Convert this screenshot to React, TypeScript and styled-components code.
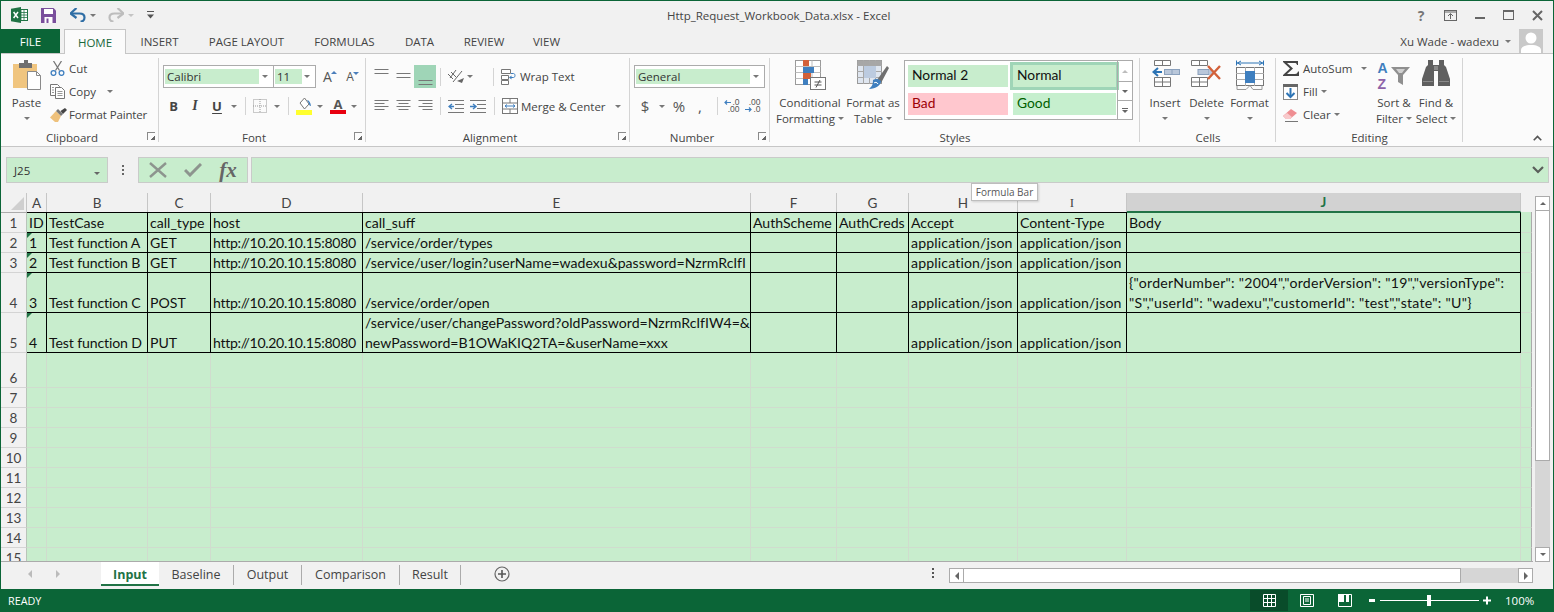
import React from 'react';
import styled, { createGlobalStyle } from 'styled-components';

const GREEN = '#0b6537';
const CELL = '#c8edcd';
const UI = '"Open Sans", "Liberation Sans", sans-serif';
const SHEET = 'Lato, "Liberation Sans", sans-serif';

const Global = createGlobalStyle`
  html, body { margin: 0; padding: 0; background: #f1f1f1; }
  * { box-sizing: border-box; }
`;

const Win = styled.div`
  width: 1554px; height: 612px; overflow: hidden; background: #f1f1f1;
  border: 1px solid ${GREEN}; border-bottom: 0;
  display: flex; flex-direction: column;
  font-family: ${UI}; color: #444; font-size: 11.5px;
`;

/* ---------- generic bits ---------- */
const Slot = styled.span<{ $w: number; $on?: boolean }>`
  display: inline-flex; flex: none; width: ${p => p.$w}px; height: 100%;
  align-items: center; justify-content: center;
  background: ${p => (p.$on ? '#9fd5b7' : 'transparent')};
`;
const CaretMark = styled.span<{ $c?: string }>`
  display: inline-block; width: 0; height: 0; flex: none;
  border-left: 3px solid transparent; border-right: 3px solid transparent;
  border-top: 3px solid ${p => p.$c || '#777'};
`;
const VSep = styled.span`
  display: block; width: 1px; height: 18px; background: #d4d4d4;
`;

/* ---------- title bar ---------- */
const TitleBar = styled.div`
  height: 28px; display: flex; align-items: center; position: relative; flex: none;
`;
const Title = styled.div`
  position: absolute; left: 666px; top: 7px; width: 220px; text-align: center;
  font-size: 11.5px; white-space: nowrap; color: #444;
`;
const WinBtns = styled.div`
  margin-left: auto; display: flex; height: 100%; margin-right: 1px;
`;
const HelpMark = styled.span`
  font-weight: 700; font-size: 14px; color: #777;
`;

/* ---------- tabs ---------- */
const TabBar = styled.div`
  height: 25px; display: flex; flex: none; border-bottom: 1px solid #c6c6c6; position: relative;
`;
const FileTab = styled.div`
  width: 59px; height: 24px; background: ${GREEN}; color: #fff;
  display: flex; align-items: center; justify-content: center; font-size: 11.5px;
`;
const RibbonTab = styled.div<{ $w: number; $active?: boolean }>`
  width: ${p => p.$w}px; height: ${p => (p.$active ? 25 : 24)}px;
  display: flex; align-items: center; justify-content: center; font-size: 11.5px; flex: none;
  color: ${p => (p.$active ? '#19693c' : '#444')};
  background: ${p => (p.$active ? '#fbfbfb' : 'transparent')};
  ${p => (p.$active ? 'border: 1px solid #c6c6c6; border-bottom: 0; z-index: 1;' : '')}
`;
const UserBox = styled.div`
  margin-left: auto; display: flex; align-items: center; height: 24px; font-size: 11.5px; margin-right: 10px;
`;
const UserName = styled.span`
  margin-right: 6px;
`;
const Avatar = styled.span`
  display: block; width: 24px; height: 24px; margin-left: 8px;
`;

/* ---------- ribbon ---------- */
const Ribbon = styled.div`
  height: 93px; flex: none; background: #fbfbfb; border-bottom: 1px solid #c6c6c6;
  display: flex; position: relative;
`;
const Group = styled.div<{ $w: number; $pad?: number }>`
  position: relative; flex: none; width: ${p => p.$w}px; height: 92px;
  padding-left: ${p => p.$pad ?? 4}px; display: flex; flex-direction: column;
  &::after {
    content: ''; position: absolute; right: 0; top: 4px; bottom: 4px; width: 1px; background: #d4d4d4;
  }
`;
const GroupBody = styled.div`
  height: 76px; flex: none; display: flex; align-items: flex-start;
`;
const Stack = styled.div`
  display: flex; flex-direction: column;
`;
const SmallStack = styled(Stack)`
  padding-top: 3px;
`;
const CollapseCol = styled(Stack)`
  padding-top: 80px;
`;
const GroupLabel = styled.div<{ $shift: number; $launcher?: boolean }>`
  height: 16px; line-height: 16px; text-align: center; font-size: 11.5px;
  margin-left: ${p => p.$shift}px;
  padding-right: ${p => (p.$launcher ? 16 : 0)}px;
`;
const Launcher = styled.span`
  position: absolute; right: 4px; bottom: 6px; display: block; width: 8px; height: 8px;
  border-left: 1px solid #8a8a8a; border-top: 1px solid #8a8a8a;
  &::after {
    content: ''; position: absolute; right: 0; bottom: 0; width: 4px; height: 4px;
    background: linear-gradient(135deg, transparent 45%, #666 45%);
  }
`;
const Row1 = styled.div`
  margin-top: 11px; height: 23px; display: flex; align-items: center;
`;
const Row2 = styled.div`
  margin-top: 9px; height: 18px; display: flex; align-items: center;
`;
const Combo = styled.div<{ $w: number; $fill: number; $joined?: boolean }>`
  width: ${p => p.$w}px; height: 23px; border: 1px solid #ababab; background: #fff; flex: none;
  padding: 3px 1px; position: relative; font-size: 11.5px; display: flex;
  margin-left: ${p => (p.$joined ? -1 : 0)}px;
  & > b {
    display: block; font-weight: 400; width: ${p => p.$fill}px; height: 15px; line-height: 15px;
    background: ${CELL}; padding-left: 2px; color: #333;
  }
`;
const ComboCaret = styled.span`
  margin-left: auto; margin-right: 4px; align-self: center; display: flex;
`;
const SmallRow = styled.div<{ $icon: number; $w: number }>`
  height: 23px; width: ${p => p.$w}px; display: flex; align-items: center; white-space: nowrap;
  & > i { display: flex; width: ${p => p.$icon}px; flex: none; justify-content: flex-start; font-style: normal; }
`;
const Gap = styled.span<{ $w: number }>`
  display: block; flex: none; width: ${p => p.$w}px;
`;
const Large = styled.div<{ $w: number }>`
  width: ${p => p.$w}px; flex: none; padding-top: 6px; display: flex; flex-direction: column;
  align-items: center; line-height: 15.5px; white-space: nowrap; font-size: 11.5px;
  & > i { display: flex; height: 35px; align-items: flex-start; justify-content: center; font-style: normal; }
  & > span { display: flex; align-items: center; gap: 3px; height: 15.5px; }
`;
const GlyphB = styled.span`
  font-weight: 700; font-size: 13px; color: #444;
`;
const GlyphI = styled.span`
  font-family: 'Liberation Serif', serif; font-style: italic; font-weight: 700; font-size: 14px; color: #444;
`;
const GlyphU = styled.span`
  font-weight: 700; font-size: 13px; color: #444; text-decoration: underline; text-underline-offset: 2px;
`;
const Grow = styled.span<{ $size: number }>`
  position: relative; display: inline-block; font-size: ${p => p.$size}px; color: #555; line-height: 1; font-family: ${UI};
`;
const TinyTri = styled.span<{ $down?: boolean }>`
  position: absolute; right: -5px; top: 1px; width: 0; height: 0;
  border-left: 3px solid transparent; border-right: 3px solid transparent;
  ${p => (p.$down ? 'border-top: 3px solid #4a7ebb;' : 'border-bottom: 3px solid #4a7ebb;')}
`;
const ColorA = styled.span<{ $bar: string }>`
  display: flex; flex-direction: column; align-items: center; width: 16px; line-height: 12px;
  font-size: 13px; font-weight: 700; color: #555;
  &::after { content: ''; display: block; width: 16px; height: 4px; background: ${p => p.$bar}; }
`;
const NumGlyph = styled.span<{ $size?: number }>`
  font-size: ${p => p.$size ?? 15}px; color: #555;
`;
const Dec = styled.span`
  display: flex; flex-direction: column; align-items: flex-end; font-size: 8.5px; line-height: 7.5px; color: #555;
  font-family: "Liberation Sans", sans-serif;
  & > span { display: flex; align-items: center; gap: 1px; }
`;
const TextAfter = styled.span`
  white-space: nowrap;
`;
const TightText = styled(TextAfter)`
  letter-spacing: -0.15px;
`;
const SortWrap = styled.span`
  display: flex; align-items: flex-start; height: 32px;
`;
const SortLetters = styled.span`
  display: flex; flex-direction: column; width: 13px; font-weight: 700; font-size: 14px;
  font-family: "Liberation Sans", sans-serif;
`;
const SortA = styled.span`
  height: 16px; line-height: 16px; color: #3f7fbf;
`;
const SortZ = styled.span`
  height: 16px; line-height: 16px; color: #8e63a8;
`;

/* gallery */
const Gallery = styled.div`
  width: 229px; height: 60px; margin-top: 6px; margin-left: 4px; flex: none;
  border: 1px solid #ababab; background: #fff; display: flex; padding: 4px 0 0 3px;
`;
const StyleGrid = styled.div`
  display: grid; grid-template-columns: 100px 103px; grid-template-rows: 22px 22px;
  column-gap: 5px; row-gap: 6px;
`;
const StyleCell = styled.div<{ $bg: string; $fg: string; $sel?: boolean }>`
  background: ${p => p.$bg}; color: ${p => p.$fg}; font-family: ${SHEET}; font-size: 13.8px;
  line-height: 19px; padding-left: 4px;
  ${p => (p.$sel ? 'box-shadow: 0 0 0 3px #9fd5b7;' : '')}
`;
const GalScroll = styled.div`
  width: 15px; height: 58px; margin: -4px 0 0 auto; border-left: 1px solid #ababab;
  display: grid; grid-template-rows: 20px 19px 19px;
`;
const GalBtn = styled.div<{ $top?: boolean }>`
  display: flex; flex-direction: column; align-items: center; justify-content: center; gap: 1px;
  ${p => (p.$top ? '' : 'border-top: 1px solid #ababab;')}
`;
const UpMark = styled.span<{ $c?: string }>`
  display: block; width: 0; height: 0;
  border-left: 3px solid transparent; border-right: 3px solid transparent;
  border-bottom: 3px solid ${p => p.$c || '#bdbdbd'};
`;
const BarMark = styled.span`
  display: block; width: 6px; height: 1px; background: #666;
`;

/* ---------- formula bar ---------- */
const FormulaBar = styled.div`
  height: 46px; flex: none; display: flex; padding: 10px 0 0 5px;
`;
const NameBox = styled.div`
  width: 102px; height: 26px; background: ${CELL}; border: 1px solid #c9cbc9; display: flex; align-items: center;
  padding: 0 7px 0 7px; font-size: 11.5px; color: #333;
  & > span { margin-left: auto; }
`;
const Dots = styled.div`
  width: 30px; height: 26px; display: flex; align-items: center; justify-content: center;
`;
const FxBox = styled.div`
  width: 110px; height: 26px; background: ${CELL}; border: 1px solid #c9cbc9; display: flex; align-items: center;
`;
const FxGlyph = styled.span`
  font-family: 'Liberation Serif', serif; font-style: italic; font-weight: 700; font-size: 21px; color: #666; width: 38px; text-align: center; line-height: 20px;
`;
const FormulaInput = styled.div`
  width: 1298px; height: 26px; margin-left: 3px; background: ${CELL}; border: 1px solid #c9cbc9;
  display: flex; align-items: center; justify-content: flex-end; padding-right: 3px;
`;

/* ---------- sheet ---------- */
const SheetArea = styled.div`
  height: 369px; flex: none; display: flex; position: relative;
`;
const SheetFrame = styled.div`
  width: 1532px; height: 369px; overflow: hidden; flex: none; border-bottom: 1px solid #ababab;
`;
const SheetGrid = styled.div<{ $cols: string; $rows: string }>`
  display: grid; grid-template-columns: ${p => p.$cols}; grid-template-rows: ${p => p.$rows};
  font-family: ${SHEET}; font-size: 14.1px; color: #111;
`;
const Corner = styled.div`
  background: #f1f1f1; border-right: 1px solid #c6c6c6; position: relative;
  &::after {
    content: ''; position: absolute; right: 2px; bottom: 2px; width: 0; height: 0;
    border-left: 13px solid transparent; border-bottom: 13px solid #cfcfcf;
  }
`;
const ColHead = styled.div<{ $sel?: boolean; $blank?: boolean }>`
  background: ${p => (p.$sel ? '#d2d2d2' : '#f1f1f1')};
  color: ${p => (p.$sel ? '#217346' : '#444')}; font-weight: ${p => (p.$sel ? 700 : 400)};
  ${p => (p.$blank ? '' : 'border-right: 1px solid #c6c6c6;')}
  ${p => (p.$sel ? 'border-bottom: 1px solid #217346;' : '')}
  display: flex; align-items: center; justify-content: center; line-height: 18px; font-size: 13.5px;
`;
const RowHead = styled.div<{ $first?: boolean }>`
  background: #f1f1f1; border-right: 1px solid #b9c4b9; border-bottom: 1px solid #d4d4d4; color: #444;
  ${p => (p.$first ? 'border-top: 1px solid #ababab;' : '')}
  display: flex; align-items: flex-end; justify-content: center; line-height: 17px; font-size: 13.5px;
`;
const Cell = styled.div<{ $on?: boolean; $top?: boolean; $wrap?: boolean; $sel?: boolean; $end?: boolean }>`
  position: relative; background: ${CELL}; overflow: hidden; padding: 0 2px;
  display: flex; align-items: flex-end;
  line-height: 20px; white-space: ${p => (p.$wrap ? 'pre' : 'nowrap')};
  border-right: 1px solid ${p => (p.$on ? '#000' : p.$end ? '#ababab' : '#d0dcce')};
  border-bottom: 1px solid ${p => (p.$on ? '#000' : '#d0dcce')};
  ${p => (p.$top ? `border-top: 1px solid ${p.$sel ? '#217346' : '#000'};` : '')}
`;
const CellText = styled.span<{ $ls: number }>`
  display: block; margin-bottom: -1px; letter-spacing: ${p => p.$ls}px;
`;
const NoteMark = styled.span`
  position: absolute; left: 0; top: 0; width: 0; height: 0;
  border-top: 5px solid #217346; border-right: 5px solid transparent;
`;
const Tooltip = styled.div`
  position: absolute; left: 970px; top: -10px; width: 67px; height: 18px; background: #fff; z-index: 3;
  border: 1px solid #bdbdbd; box-shadow: 1px 1px 2px rgba(0,0,0,.15); font-size: 10px; line-height: 16px; text-align: center; color: #575757; white-space: nowrap;
`;
const VScroll = styled.div`
  width: 15px; margin-left: 2px; height: 369px; padding-top: 3px; display: flex; flex-direction: column; flex: none;
`;
const ScrollBtn = styled.div`
  height: 15px; width: 15px; flex: none; background: #fff; border: 1px solid #ababab;
  display: flex; align-items: center; justify-content: center;
`;
const VThumb = styled.div<{ $h: number }>`
  height: ${p => p.$h}px; flex: none; background: #fff; border: 1px solid #ababab; border-top: 0;
`;
const VTrack = styled.div`
  flex: 1; background: #d6d6d6;
`;

/* ---------- sheet tabs ---------- */
const TabStrip = styled.div`
  height: 27px; flex: none; display: flex; align-items: flex-start; position: relative;
`;
const NavArrows = styled.div`
  width: 100px; height: 24px; display: flex; align-items: center; padding-left: 27px; gap: 24px;
`;
const NavArrow = styled.span`
  display: block; width: 0; height: 0; border-top: 4px solid transparent; border-bottom: 4px solid transparent;
`;
const NavLeft = styled(NavArrow)<{ $dark?: boolean }>`
  border-right: 4px solid ${p => (p.$dark ? '#666' : '#bbb')};
`;
const NavRight = styled(NavArrow)<{ $dark?: boolean }>`
  border-left: 4px solid ${p => (p.$dark ? '#666' : '#bbb')};
`;
const SheetTab = styled.div<{ $w: number; $active?: boolean }>`
  width: ${p => p.$w}px; flex: none; height: ${p => (p.$active ? 24 : 20)}px;
  margin-top: ${p => (p.$active ? 0 : 3)}px;
  display: flex; align-items: center; justify-content: center; font-size: 12.5px; white-space: nowrap;
  ${p => (p.$active
    ? `background:#fff; color:#217346; font-weight:700; border-bottom:2px solid #217346; padding-top:2px;`
    : `border-right:1px solid #ababab; color:#444; padding-bottom:2px;`)}
`;
const Plus = styled.div`
  margin-left: 33px; margin-top: 4px; width: 16px; height: 16px; display: flex;
`;
const HScrollWrap = styled.div`
  margin-left: auto; display: flex; align-items: center; height: 21px; margin-right: 20px;
`;
const TabDots = styled.div`
  width: 32px; display: flex; justify-content: center;
`;
const HThumb = styled.div`
  width: 497px; height: 15px; background: #fff; border: 1px solid #ababab; border-left: 0;
`;
const HTrack = styled.div`
  width: 57px; height: 15px; background: #d6d6d6;
`;
const HRow = styled.div`
  display: flex; margin-top: 6px;
`;

/* ---------- status ---------- */
const Status = styled.div`
  height: 23px; flex: none; margin: 0 -1px; background: ${GREEN}; color: #fff; display: flex; align-items: center;
  font-size: 10.8px; padding: 0 12px 0 8px;
`;
const ViewBtns = styled.div`
  margin-left: auto; display: flex; height: 22px; align-items: center;
`;
const ViewBtn = styled.div<{ $on?: boolean }>`
  width: 38px; height: 21px; display: flex; align-items: center; justify-content: center;
  background: ${p => (p.$on ? '#094c2a' : 'transparent')};
`;
const Zoomer = styled.div`
  display: flex; align-items: center; width: 127px; margin-left: 2px; gap: 2px;
`;
const ZoomTrack = styled.div`
  flex: 1; height: 1px; background: #fff; position: relative;
  &::after { content:''; position:absolute; left: 47px; top:-5px; width:4px; height:11px; background:#fff; }
`;
const ZoomPct = styled.span`
  font-size: 11.5px; width: 49px; padding-left: 12px;
`;

/* ---------- icons ---------- */
const ExcelLogo = () => (
  <svg width="17" height="16" viewBox="0 0 17 16">
    <rect x="6.5" y="2.5" width="10" height="11" fill="#fff" stroke="#1f7244" />
    <path d="M10 3v10M13 3v10M7 5.5h9M7 8h9M7 10.5h9" stroke="#1f7244" strokeWidth=".8" />
    <path d="M0 1.8 10 0v16L0 14.2z" fill="#1f7244" />
    <path d="M2.6 5 7 11M7 5l-4.4 6" stroke="#fff" strokeWidth="1.5" />
  </svg>
);
const SaveIcon = () => (
  <svg width="15" height="15" viewBox="0 0 15 15">
    <path d="M0 0h12.5L15 2.5V15H0z" fill="#7a4f9c" />
    <rect x="3" y="1" width="9" height="5" fill="#fff" />
    <rect x="3.5" y="9" width="8" height="6" fill="#fff" />
    <rect x="5.5" y="10.5" width="2" height="4.5" fill="#7a4f9c" />
  </svg>
);
const UndoIcon = ({ c }: { c: string }) => (
  <svg width="16" height="14" viewBox="0 0 16 14">
    <path d="M1.5 5.5h8c3 0 5 1.6 5 4s-1.5 4-4 4" fill="none" stroke={c} strokeWidth="2.2" />
    <path d="M6.5 0 .5 5.5 6.5 10" fill="none" stroke={c} strokeWidth="2.2" />
  </svg>
);
const RedoIcon = ({ c }: { c: string }) => (
  <svg width="16" height="14" viewBox="0 0 16 14">
    <path d="M14.5 5.5h-8c-3 0-5 1.6-5 4s1.5 4 4 4" fill="none" stroke={c} strokeWidth="2.2" />
    <path d="M9.5 0l6 5.5-6 4.5" fill="none" stroke={c} strokeWidth="2.2" />
  </svg>
);
const QatMore = () => (
  <svg width="7" height="8" viewBox="0 0 7 8">
    <path d="M0 .5h7" stroke="#555" />
    <path d="M0 3.5h7L3.5 7.5z" fill="#555" />
  </svg>
);
const PasteIcon = () => (
  <svg width="30" height="32" viewBox="0 0 30 32">
    <path d="M1 4h24v24H1z" fill="#f0c57f" />
    <path d="M7 3h5V0h4v3h4v5H7z" fill="#6f6f6f" />
    <path d="M15.5 11.5h9l4 4v14h-13z" fill="#fff" stroke="#8a8a8a" />
    <path d="M24.5 11.5v4h4" fill="none" stroke="#8a8a8a" />
  </svg>
);
const CutIcon = () => (
  <svg width="15" height="15" viewBox="0 0 15 15">
    <path d="M3.5 0l6 9.5M11.5 0l-6 9.500" stroke="#777" strokeWidth="1.3" fill="none" />
    <circle cx="3.5" cy="12" r="2.4" fill="none" stroke="#3f7fbf" strokeWidth="1.3" />
    <circle cx="11.5" cy="12" r="2.4" fill="none" stroke="#3f7fbf" strokeWidth="1.3" />
  </svg>
);
const CopyIcon = () => (
  <svg width="16" height="15" viewBox="0 0 16 15">
    <path d="M.5.5h7l2 2v9h-9z" fill="#fff" stroke="#777" />
    <path d="M5.5 3.5h6l3 3v8h-9z" fill="#fff" stroke="#777" />
    <path d="M2 3.5h2M2 6h2M2 8.5h2M7.5 7.5h5M7.5 9.5h5M7.5 11.5h5" stroke="#999" />
  </svg>
);
const PainterIcon = () => (
  <svg width="17" height="14" viewBox="0 0 17 14">
    <path d="M0 9.5 6 3l5 5-3 6H5z" fill="#eec17c" />
    <path d="M6 3l5 5 2-2-5-5z" fill="#777" />
    <path d="M10.5 3 15 0l2 2-4 4z" fill="#444" />
  </svg>
);
const LinesIcon = ({ y, w = [14, 14, 14, 14], a = 'l' }: { y: number[]; w?: number[]; a?: 'l' | 'c' | 'r' }) => (
  <svg width="15" height="22" viewBox="0 0 15 22">
    {y.map((v, i) => {
      const ww = w[i] ?? 14;
      const x = a === 'l' ? 0.5 : a === 'c' ? (15 - ww) / 2 : 14.5 - ww;
      return <path key={i} d={`M${x} ${v + 0.5}h${ww}`} stroke="#777" />;
    })}
  </svg>
);
const OrientIcon = () => (
  <svg width="17" height="15" viewBox="0 0 17 15">
    <path d="M2 9 8 1M5 13l9-11" stroke="#666" fill="none" />
    <path d="M0 5l5 5M3 3l5 5" stroke="#666" fill="none" />
    <path d="M9 12l7-3-2 5z" fill="#666" />
  </svg>
);
const IndentIcon = ({ flip }: { flip?: boolean }) => (
  <svg width="16" height="13" viewBox="0 0 16 13">
    <path d="M0 .5h16M7 4.5h9M7 8.5h9M0 12.5h16" stroke="#777" />
    {flip ? <path d="M0 6.5h5M3 4l3 2.5L3 9" stroke="#3f7fbf" strokeWidth="1.4" fill="none" /> : <path d="M6 6.5H1M4 4 1 6.5 4 9" stroke="#3f7fbf" strokeWidth="1.4" fill="none" />}
  </svg>
);
const WrapIcon = () => (
  <svg width="16" height="16" viewBox="0 0 16 16">
    <path d="M.5 .5h9v4h-9zM.5 6.5h7v4h-7zM.5 11.5h7v4h-7z" fill="#fff" stroke="#777" />
    <path d="M9 8.5h3.500c2 0 2-4 0-4H10" fill="none" stroke="#3f7fbf" />
    <path d="M8 8.500l2.500-2v4z" fill="#3f7fbf" />
  </svg>
);
const MergeIcon = () => (
  <svg width="16" height="16" viewBox="0 0 16 16">
    <rect x=".5" y=".5" width="15" height="15" fill="#fff" stroke="#777" />
    <path d="M.5 5h15M.5 11h15M8 .5V5M8 11v4.500" stroke="#777" />
    <path d="M3 8h10M5 6.500 3 8l2 1.500M11 6.500 13 8l-2 1.500" stroke="#3f7fbf" fill="none" />
  </svg>
);
const BorderIcon = () => (
  <svg width="14" height="14" viewBox="0 0 14 14">
    <rect x=".5" y=".5" width="13" height="13" fill="none" stroke="#999" strokeDasharray="1 1" />
    <path d="M7 0v14M0 7h14" stroke="#999" strokeDasharray="1 1" />
  </svg>
);
const FillIcon = () => (
  <svg width="16" height="18" viewBox="0 0 16 18">
    <path d="M4 6 8.500 1 13 7l-4.500 5z" fill="#fff" stroke="#777" />
    <path d="M11 3c2 .5 3.500 2 4 6-1.500 0-2-1-2-2.500z" fill="#3f7fbf" />
    <rect y="13" width="16" height="5" fill="#ffff2e" />
  </svg>
);
const IncDec = ({ inc }: { inc?: boolean }) => (
  <svg width="7" height="7" viewBox="0 0 7 7">
    {inc ? <path d="M7 3.500H1M3 1.500 1 3.500l2 2" stroke="#3f7fbf" strokeWidth="1.200" fill="none" /> : <path d="M0 3.500h6M4 1.500l2 2-2 2" stroke="#3f7fbf" strokeWidth="1.200" fill="none" />}
  </svg>
);
const CondIcon = () => (
  <svg width="31" height="31" viewBox="0 0 31 31">
    <rect x=".5" y=".5" width="25" height="24" fill="#fff" stroke="#9a9a9a" />
    <path d="M9 .5v24M17 .5v24M.5 6.500h25M.5 12.500h25M.5 18.500h25" stroke="#bdbdbd" />
    <rect x="8" y="0" width="6" height="6" fill="#d2613a" />
    <rect x="8" y="7" width="11" height="6" fill="#3f7fbf" />
    <rect x="8" y="13" width="8" height="6" fill="#d2613a" />
    <rect x="8" y="19" width="5" height="6" fill="#3f7fbf" />
    <rect x="15.500" y="17.500" width="15" height="12" fill="#fff" stroke="#777" />
    <path d="M19.500 22h7M19.500 25h7M21 27.500 25 20" stroke="#555" />
  </svg>
);
const TableIcon = () => (
  <svg width="32" height="30" viewBox="0 0 32 30">
    <rect x=".5" y=".5" width="24" height="23" fill="#dfe6f0" stroke="#9a9a9a" />
    <rect x=".5" y=".5" width="24" height="5" fill="#a7a7a7" />
    <path d="M6.500 0v24M12.500 0v24M18.500 0v24M0 5.500h25M0 11.500h25M0 17.500h25" stroke="#a8a8a8" />
    <rect x="7" y="6" width="12" height="12" fill="#bccbe0" />
    <path d="M20 20 30 6l2 2-8 15z" fill="#6f6f6f" />
    <path d="M16 20c3-2 6-1 8 1 0 4-5 8-12 8 2-2 4-3 4-9z" fill="#3f7fbf" />
    <path d="M17 23c1-1 3-1 4 1" stroke="#fff" fill="none" />
  </svg>
);
const InsertIcon = () => (
  <svg width="29" height="28" viewBox="0 0 29 28">
    <path d="M3.500 .5h16v5h-16zM11.500 .5v5M3.500 17.500h16v9h-16zM3.500 22h16M11.500 17.500v9" fill="#fff" stroke="#777" />
    <rect x="13.500" y="9.500" width="15" height="5" fill="#b9c7da" stroke="#8aa0bc" />
    <path d="M21 9v6" stroke="#8aa0bc" />
    <path d="M3 12h8" stroke="#2d74b5" strokeWidth="2" />
    <path d="M7 8 2.500 12 7 16" stroke="#2d74b5" strokeWidth="2" fill="none" />
  </svg>
);
const DeleteIcon = () => (
  <svg width="31" height="28" viewBox="0 0 31 28">
    <path d="M.500 .5h16v5h-16zM8.500 .5v5M.500 17.500h16v9h-16zM.500 22h16M8.500 17.500v9" fill="#fff" stroke="#777" />
    <rect x="7" y="9.500" width="11" height="5" fill="#b9c7da" stroke="#8aa0bc" />
    <path d="M18 8l5 4-5 4z" fill="#b9c7da" />
    <path d="M17 6l12 13M29 6 17 19" stroke="#d2613a" strokeWidth="2.400" />
  </svg>
);
const FormatIcon = () => (
  <svg width="28" height="31" viewBox="0 0 28 31">
    <path d="M.500 .5v5M27.500 .5v5M1 3h26M5 1 1.500 3 5 5M23 1l3.500 2L23 5" stroke="#2d74b5" fill="none" />
    <rect x=".5" y="7.500" width="27" height="18" fill="#fff" stroke="#777" />
    <path d="M9.500 7v19M18.500 7v19M0 13.500h28M0 19.500h28" stroke="#aaa" />
    <rect x="9" y="11" width="10" height="12" fill="#3f7fbf" />
    <path d="M1 25.500v4h9l4-4M14 25.500l3 4h9v-4" fill="none" stroke="#999" />
  </svg>
);
const SigmaIcon = () => (
  <svg width="16" height="15" viewBox="0 0 16 15">
    <path d="M0 0h15v4h-1c-.3-1.500-1-2-2.500-2H4l6 5.500L4 13h8c1.500 0 2.500-.8 3-2.500h1V15H0v-1l7-6.500L0 1z" fill="#444" />
  </svg>
);
const FillDownIcon = () => (
  <svg width="15" height="16" viewBox="0 0 15 16">
    <rect x=".5" y=".5" width="14" height="15" fill="#fff" stroke="#888" />
    <rect width="15" height="3" fill="#666" />
    <path d="M7.500 4v9" stroke="#2d74b5" strokeWidth="2" />
    <path d="M3.500 9l4 4 4-4" stroke="#2d74b5" strokeWidth="2" fill="none" />
  </svg>
);
const EraserIcon = () => (
  <svg width="15" height="14" viewBox="0 0 15 14">
    <path d="M0 8 8 1l6 4-7 6H3z" fill="#ef8e92" />
    <path d="M0 8l3 3h4l2-2-5-4z" fill="#f8c9cb" />
    <path d="M2 13.500h13" stroke="#777" />
  </svg>
);
const FunnelIcon = () => (
  <svg width="20" height="28" viewBox="0 0 20 28">
    <path d="M0 7h19l-7 8v10l-5-3v-7z" fill="#8f8f8f" />
    <path d="M5 9h9l-3 4H8z" fill="#d0d0d0" />
  </svg>
);
const BinocularIcon = () => (
  <svg width="28" height="26" viewBox="0 0 28 26">
    <path d="M6 0h5v5h6V0h5v5l2 2 4 12v7H16V11h-4v15H0v-7L4 7l2-2z" fill="#5f5f5f" />
    <rect x="12" y="6" width="4" height="4" fill="#8a8a8a" />
    <rect x="1" y="21" width="10" height="1" fill="#8a8a8a" />
    <rect x="17" y="21" width="10" height="1" fill="#8a8a8a" />
  </svg>
);
const Chevron = ({ up, c = '#555', w = 12 }: { up?: boolean; c?: string; w?: number }) => (
  <svg width={w} height="8" viewBox="0 0 12 8">
    <path d={up ? 'M1 7l5-5 5 5' : 'M1 1l5 5 5-5'} fill="none" stroke={c} strokeWidth="2.200" />
  </svg>
);
const WinRestoreUp = () => (
  <svg width="13" height="11" viewBox="0 0 13 11">
    <rect x=".5" y=".5" width="12" height="10" fill="none" stroke="#666" />
    <path d="M.5 2h12" stroke="#666" />
    <path d="M6.500 9V4M4 6l2.500-2.500L9 6" stroke="#666" fill="none" />
  </svg>
);
const WinMin = () => (
  <svg width="10" height="10" viewBox="0 0 10 10"><rect y="7" width="10" height="2" fill="#666" /></svg>
);
const WinMax = () => (
  <svg width="11" height="10" viewBox="0 0 11 10">
    <rect x=".5" y=".5" width="10" height="9" fill="none" stroke="#666" />
    <rect width="11" height="2" fill="#666" />
  </svg>
);
const WinClose = () => (
  <svg width="11" height="11" viewBox="0 0 11 11">
    <path d="M1 1l9 9M10 1l-9 9" stroke="#666" strokeWidth="2" />
  </svg>
);
const AvatarIcon = () => (
  <svg width="24" height="24" viewBox="0 0 24 24">
    <rect width="24" height="24" fill="#c9c9c9" />
    <circle cx="12" cy="9" r="5.500" fill="#fff" />
    <path d="M2 24v-3c0-3 4-5 10-5s10 2 10 5v3z" fill="#fff" />
  </svg>
);
const CrossIcon = () => (
  <svg width="18" height="16" viewBox="0 0 18 16">
    <path d="M1 1l16 14M17 1 1 15" stroke="#8d948e" strokeWidth="2.400" />
  </svg>
);
const CheckIcon = () => (
  <svg width="18" height="14" viewBox="0 0 18 14">
    <path d="M1 7l5 5L17 1" stroke="#8d948e" strokeWidth="3" fill="none" />
  </svg>
);
const VDots = ({ c = '#666' }: { c?: string }) => (
  <svg width="2" height="10" viewBox="0 0 2 10">
    <path d="M0 0h2v2H0zM0 4h2v2H0zM0 8h2v2H0z" fill={c} />
  </svg>
);
const IBeamHead = styled.span`
  font-family: "Liberation Serif", serif; font-size: 13px;
`;
const PlusIcon = () => (
  <svg width="16" height="16" viewBox="0 0 16 16">
    <circle cx="8" cy="8" r="7" fill="none" stroke="#666" strokeWidth="1.200" />
    <path d="M8 4v8M4 8h8" stroke="#555" strokeWidth="1.600" />
  </svg>
);
const ViewNormal = () => (
  <svg width="13" height="13" viewBox="0 0 13 13">
    <path d="M.5.5h12v12H.5zM4.500 0v13M8.500 0v13M0 4.500h13M0 8.500h13" fill="none" stroke="#fff" />
  </svg>
);
const ViewPage = () => (
  <svg width="14" height="13" viewBox="0 0 14 13">
    <path d="M.5.5h13v12H.5z" fill="none" stroke="#fff" />
    <path d="M3.500 2.500h7v8h-7zM5 5h4M5 7h4" fill="none" stroke="#fff" />
  </svg>
);
const ViewBreak = () => (
  <svg width="14" height="13" viewBox="0 0 14 13">
    <path d="M.5.500h13v12H.5z" fill="none" stroke="#fff" />
    <path d="M0 0h6v8H0zM8 0h3v8H8z" fill="#fff" />
  </svg>
);
const ZoomMinus = () => (
  <svg width="12" height="9" viewBox="0 0 12 9"><rect x="3" y="3" width="6" height="3" fill="#fff" /></svg>
);
const ZoomPlus = () => (
  <svg width="12" height="9" viewBox="0 0 12 9"><path d="M2 3.500h8v2H2zM5 .5h2v8H5z" fill="#fff" /></svg>
);

/* ---------- data ---------- */
const COLS = [
  { n: 'A', w: 20, ls: 0 }, { n: 'B', w: 101, ls: -0.13 }, { n: 'C', w: 63, ls: 0 }, { n: 'D', w: 152, ls: -0.33 }, { n: 'E', w: 388, ls: 0 },
  { n: 'F', w: 86, ls: 0 }, { n: 'G', w: 72, ls: 0 }, { n: 'H', w: 109, ls: 0.15 }, { n: 'I', w: 109, ls: 0.15 }, { n: 'J', w: 394, ls: 0.28 }, { n: '', w: 11, ls: 0 },
];
const HOST = 'http://10.20.10.15:8080';
const JSONT = 'application/json';
const TABLE: string[][] = [
  ['ID', 'TestCase', 'call_type', 'host', 'call_suff', 'AuthScheme', 'AuthCreds', 'Accept', 'Content-Type', 'Body'],
  ['1', 'Test function A', 'GET', HOST, '/service/order/types', '', '', JSONT, JSONT, ''],
  ['2', 'Test function B', 'GET', HOST, '/service/user/login?userName=wadexu&password=NzrmRcIfI', '', '', JSONT, JSONT, ''],
  ['3', 'Test function C', 'POST', HOST, '/service/order/open', '', '', JSONT, JSONT, '{"orderNumber": "2004","orderVersion": "19","versionType":\n"S","userId": "wadexu","customerId": "test","state": "U"}'],
  ['4', 'Test function D', 'PUT', HOST, '/service/user/changePassword?oldPassword=NzrmRcIfIW4=&\nnewPassword=B1OWaKIQ2TA=&userName=xxx', '', '', JSONT, JSONT, ''],
];
const ROW_H = [21, 20, 20, 40, 40, 35, 20, 20, 20, 20, 20, 20, 20, 20, 20];

const colTemplate = '26px ' + COLS.map(c => c.w + 'px').join(' ');
const rowTemplate = '19px ' + ROW_H.map(h => h + 'px').join(' ');

export default function App() {
  return (
    <>
      <Global />
      <Win>
        <TitleBar>
          <Gap $w={10} />
          <ExcelLogo />
          <Gap $w={13} />
          <SaveIcon />
          <Gap $w={14} />
          <UndoIcon c="#2f6ea5" />
          <Gap $w={4} />
          <CaretMark />
          <Gap $w={12} />
          <RedoIcon c="#bdbdbd" />
          <Gap $w={4} />
          <CaretMark $c="#c4c4c4" />
          <Gap $w={13} />
          <QatMore />
          <Title>Http_Request_Workbook_Data.xlsx - Excel</Title>
          <WinBtns>
            <Slot $w={30}><HelpMark>?</HelpMark></Slot>
            <Slot $w={29}><WinRestoreUp /></Slot>
            <Slot $w={29}><WinMin /></Slot>
            <Slot $w={28}><WinMax /></Slot>
            <Slot $w={30}><WinClose /></Slot>
          </WinBtns>
        </TitleBar>

        <TabBar>
          <FileTab>FILE</FileTab>
          <Gap $w={4} />
          <RibbonTab $w={62} $active>HOME</RibbonTab>
          <RibbonTab $w={67}>INSERT</RibbonTab>
          <RibbonTab $w={107}>PAGE LAYOUT</RibbonTab>
          <RibbonTab $w={89}>FORMULAS</RibbonTab>
          <RibbonTab $w={61}>DATA</RibbonTab>
          <RibbonTab $w={68}>REVIEW</RibbonTab>
          <RibbonTab $w={57}>VIEW</RibbonTab>
          <UserBox>
            <UserName>Xu Wade - wadexu</UserName>
            <CaretMark />
            <Avatar><AvatarIcon /></Avatar>
          </UserBox>
        </TabBar>

        <Ribbon>
          <Group $w={158} $pad={7}>
            <GroupBody>
              <Large $w={37}>
                <i><PasteIcon /></i>
                <span>Paste</span>
                <span><CaretMark /></span>
              </Large>
              <Gap $w={5} />
              <SmallStack>
                <SmallRow $icon={19} $w={100}><i><CutIcon /></i><TextAfter>Cut</TextAfter></SmallRow>
                <SmallRow $icon={19} $w={100}><i><CopyIcon /></i><TextAfter>Copy</TextAfter><Gap $w={11} /><CaretMark /></SmallRow>
                <SmallRow $icon={19} $w={100}><i><PainterIcon /></i><TightText>Format Painter</TightText></SmallRow>
              </SmallStack>
            </GroupBody>
            <GroupLabel $shift={-7} $launcher>Clipboard</GroupLabel>
            <Launcher />
          </Group>

          <Group $w={207}>
            <GroupBody>
              <Stack>
                <Row1>
                  <Combo $w={111} $fill={94}><b>Calibri</b><ComboCaret><CaretMark /></ComboCaret></Combo>
                  <Combo $w={43} $fill={27} $joined><b>11</b><ComboCaret><CaretMark /></ComboCaret></Combo>
                  <Slot $w={23}><Grow $size={14}>A<TinyTri /></Grow></Slot>
                  <Slot $w={22}><Grow $size={12}>A<TinyTri $down /></Grow></Slot>
                </Row1>
                <Row2>
                  <Slot $w={21}><GlyphB>B</GlyphB></Slot>
                  <Slot $w={22}><GlyphI>I</GlyphI></Slot>
                  <Slot $w={22}><GlyphU>U</GlyphU></Slot>
                  <Slot $w={12}><CaretMark /></Slot>
                  <Slot $w={10}><VSep /></Slot>
                  <Slot $w={20}><BorderIcon /></Slot>
                  <Slot $w={13}><CaretMark /></Slot>
                  <Slot $w={10}><VSep /></Slot>
                  <Slot $w={22}><FillIcon /></Slot>
                  <Slot $w={10}><CaretMark /></Slot>
                  <Slot $w={26}><ColorA $bar="#e8000f">A</ColorA></Slot>
                  <Slot $w={6}><CaretMark /></Slot>
                </Row2>
              </Stack>
            </GroupBody>
            <GroupLabel $shift={-5} $launcher>Font</GroupLabel>
            <Launcher />
          </Group>

          <Group $w={264}>
            <GroupBody>
              <Stack>
                <Row1>
                  <Slot $w={22}><LinesIcon y={[3, 7]} /></Slot>
                  <Slot $w={22}><LinesIcon y={[7, 11]} /></Slot>
                  <Slot $w={22} $on><LinesIcon y={[14, 18]} /></Slot>
                  <Slot $w={8}><VSep /></Slot>
                  <Gap $w={1} />
                  <Slot $w={22}><OrientIcon /></Slot>
                  <Slot $w={6}><CaretMark /></Slot>
                  <Gap $w={15} />
                  <Slot $w={10}><VSep /></Slot>
                  <Slot $w={22}><WrapIcon /></Slot>
                  <TextAfter>Wrap Text</TextAfter>
                </Row1>
                <Row2>
                  <Slot $w={22}><LinesIcon y={[5, 8, 11, 14]} w={[14, 10, 14, 10]} /></Slot>
                  <Slot $w={22}><LinesIcon y={[5, 8, 11, 14]} w={[14, 10, 14, 10]} a="c" /></Slot>
                  <Slot $w={22}><LinesIcon y={[5, 8, 11, 14]} w={[14, 10, 14, 10]} a="r" /></Slot>
                  <Slot $w={8}><VSep /></Slot>
                  <Gap $w={1} />
                  <Slot $w={22}><IndentIcon /></Slot>
                  <Slot $w={22}><IndentIcon flip /></Slot>
                  <Slot $w={10}><VSep /></Slot>
                  <Slot $w={22}><MergeIcon /></Slot>
                  <TextAfter>Merge &amp; Center</TextAfter>
                  <Gap $w={9} />
                  <CaretMark />
                </Row2>
              </Stack>
            </GroupBody>
            <GroupLabel $shift={-4} $launcher>Alignment</GroupLabel>
            <Launcher />
          </Group>

          <Group $w={140}>
            <GroupBody>
              <Stack>
                <Row1>
                  <Combo $w={131} $fill={114}><b>General</b><ComboCaret><CaretMark /></ComboCaret></Combo>
                </Row1>
                <Row2>
                  <Slot $w={22}><NumGlyph>$</NumGlyph></Slot>
                  <Slot $w={12}><CaretMark /></Slot>
                  <Slot $w={22}><NumGlyph>%</NumGlyph></Slot>
                  <Slot $w={20}><NumGlyph>,</NumGlyph></Slot>
                  <Slot $w={14}><VSep /></Slot>
                  <Slot $w={16}>
                    <Dec><span><IncDec inc />.0</span><span>.00</span></Dec>
                  </Slot>
                  <Gap $w={2} />
                  <Slot $w={22}>
                    <Dec><span>.00</span><span><IncDec />.0</span></Dec>
                  </Slot>
                </Row2>
              </Stack>
            </GroupBody>
            <GroupLabel $shift={-4} $launcher>Number</GroupLabel>
            <Launcher />
          </Group>

          <Group $w={370}>
            <GroupBody>
              <Large $w={72}>
                <i><CondIcon /></i>
                <span>Conditional</span>
                <span>Formatting<CaretMark /></span>
              </Large>
              <Large $w={54}>
                <i><TableIcon /></i>
                <span>Format as</span>
                <span>Table<CaretMark /></span>
              </Large>
              <Gallery>
                <StyleGrid>
                  <StyleCell $bg={CELL} $fg="#111">Normal 2</StyleCell>
                  <StyleCell $bg={CELL} $fg="#111" $sel>Normal</StyleCell>
                  <StyleCell $bg="#ffc7ce" $fg="#9c0006">Bad</StyleCell>
                  <StyleCell $bg="#c6efce" $fg="#006100">Good</StyleCell>
                </StyleGrid>
                <GalScroll>
                  <GalBtn $top><UpMark /></GalBtn>
                  <GalBtn><CaretMark $c="#666" /></GalBtn>
                  <GalBtn><BarMark /><CaretMark $c="#666" /></GalBtn>
                </GalScroll>
              </Gallery>
            </GroupBody>
            <GroupLabel $shift={-4}>Styles</GroupLabel>
          </Group>

          <Group $w={136} $pad={5}>
            <GroupBody>
              <Large $w={40}><i><InsertIcon /></i><span>Insert</span><span><CaretMark /></span></Large>
              <Large $w={43}><i><DeleteIcon /></i><span>Delete</span><span><CaretMark /></span></Large>
              <Large $w={43}><i><FormatIcon /></i><span>Format</span><span><CaretMark /></span></Large>
            </GroupBody>
            <GroupLabel $shift={-5}>Cells</GroupLabel>
          </Group>

          <Group $w={187} $pad={7}>
            <GroupBody>
              <SmallStack>
                <SmallRow $icon={20} $w={92}><i><SigmaIcon /></i><TextAfter>AutoSum</TextAfter><Gap $w={9} /><CaretMark /></SmallRow>
                <SmallRow $icon={20} $w={92}><i><FillDownIcon /></i><TextAfter>Fill</TextAfter><Gap $w={3} /><CaretMark /></SmallRow>
                <SmallRow $icon={20} $w={92}><i><EraserIcon /></i><TextAfter>Clear</TextAfter><Gap $w={3} /><CaretMark /></SmallRow>
              </SmallStack>
              <Large $w={38}>
                <i>
                  <SortWrap>
                    <SortLetters><SortA>A</SortA><SortZ>Z</SortZ></SortLetters>
                    <FunnelIcon />
                  </SortWrap>
                </i>
                <span>Sort &amp;</span>
                <span>Filter<CaretMark /></span>
              </Large>
              <Large $w={46}><i><BinocularIcon /></i><span>Find &amp;</span><span>Select<CaretMark /></span></Large>
            </GroupBody>
            <GroupLabel $shift={-7}>Editing</GroupLabel>
          </Group>

          <Gap $w={70} />
          <CollapseCol>
            <Chevron up w={9} />
          </CollapseCol>
        </Ribbon>

        <FormulaBar>
          <NameBox>J25<span><CaretMark $c="#666" /></span></NameBox>
          <Dots><VDots /></Dots>
          <FxBox>
            <Slot $w={37}><CrossIcon /></Slot>
            <Slot $w={33}><CheckIcon /></Slot>
            <FxGlyph>fx</FxGlyph>
          </FxBox>
          <FormulaInput><Chevron c="#5a5f5a" w={14} /></FormulaInput>
        </FormulaBar>

        <SheetArea>
          <Tooltip>Formula Bar</Tooltip>
          <SheetFrame>
            <SheetGrid $cols={colTemplate} $rows={rowTemplate}>
              <Corner />
              {COLS.map((c, i) => (
                <ColHead key={c.n + i} $sel={c.n === 'J'} $blank={c.n === ''}>
                  {c.n === 'I' ? <IBeamHead>I</IBeamHead> : c.n}
                </ColHead>
              ))}
              {ROW_H.map((_, r) => (
                <React.Fragment key={r}>
                  <RowHead $first={r === 0}>{r + 1}</RowHead>
                  {COLS.map((c, i) => {
                    const isData = r < TABLE.length && i < TABLE[0].length;
                    const text = isData ? TABLE[r][i] : '';
                    return (
                      <Cell
                        key={i}
                        $on={isData}
                        $top={r === 0 && i < TABLE[0].length}
                        $sel={c.n === 'J'}
                        $end={c.n === ''}
                        $wrap={text.includes('\n')}
                      >
                        {isData && i === 0 && r > 0 ? <NoteMark /> : null}
                        {text ? <CellText $ls={r === 0 ? 0 : c.ls}>{text}</CellText> : null}
                      </Cell>
                    );
                  })}
                </React.Fragment>
              ))}
            </SheetGrid>
          </SheetFrame>
          <VScroll>
            <ScrollBtn><UpMark $c="#666" /></ScrollBtn>
            <VThumb $h={250} />
            <VTrack />
            <ScrollBtn><CaretMark $c="#666" /></ScrollBtn>
          </VScroll>
        </SheetArea>

        <TabStrip>
          <NavArrows><NavLeft /><NavRight /></NavArrows>
          <SheetTab $w={58} $active>Input</SheetTab>
          <SheetTab $w={75}>Baseline</SheetTab>
          <SheetTab $w={68}>Output</SheetTab>
          <SheetTab $w={98}>Comparison</SheetTab>
          <SheetTab $w={61}>Result</SheetTab>
          <Plus><PlusIcon /></Plus>
          <HScrollWrap>
            <TabDots><VDots c="#555" /></TabDots>
            <HRow>
              <ScrollBtn><NavLeft $dark /></ScrollBtn>
              <HThumb />
              <HTrack />
              <ScrollBtn><NavRight $dark /></ScrollBtn>
            </HRow>
          </HScrollWrap>
        </TabStrip>

        <Status>
          READY
          <ViewBtns>
            <ViewBtn $on><ViewNormal /></ViewBtn>
            <ViewBtn><ViewPage /></ViewBtn>
            <ViewBtn><ViewBreak /></ViewBtn>
            <Zoomer>
              <ZoomMinus />
              <ZoomTrack />
              <ZoomPlus />
            </Zoomer>
            <ZoomPct>100%</ZoomPct>
          </ViewBtns>
        </Status>
      </Win>
    </>
  );
}
